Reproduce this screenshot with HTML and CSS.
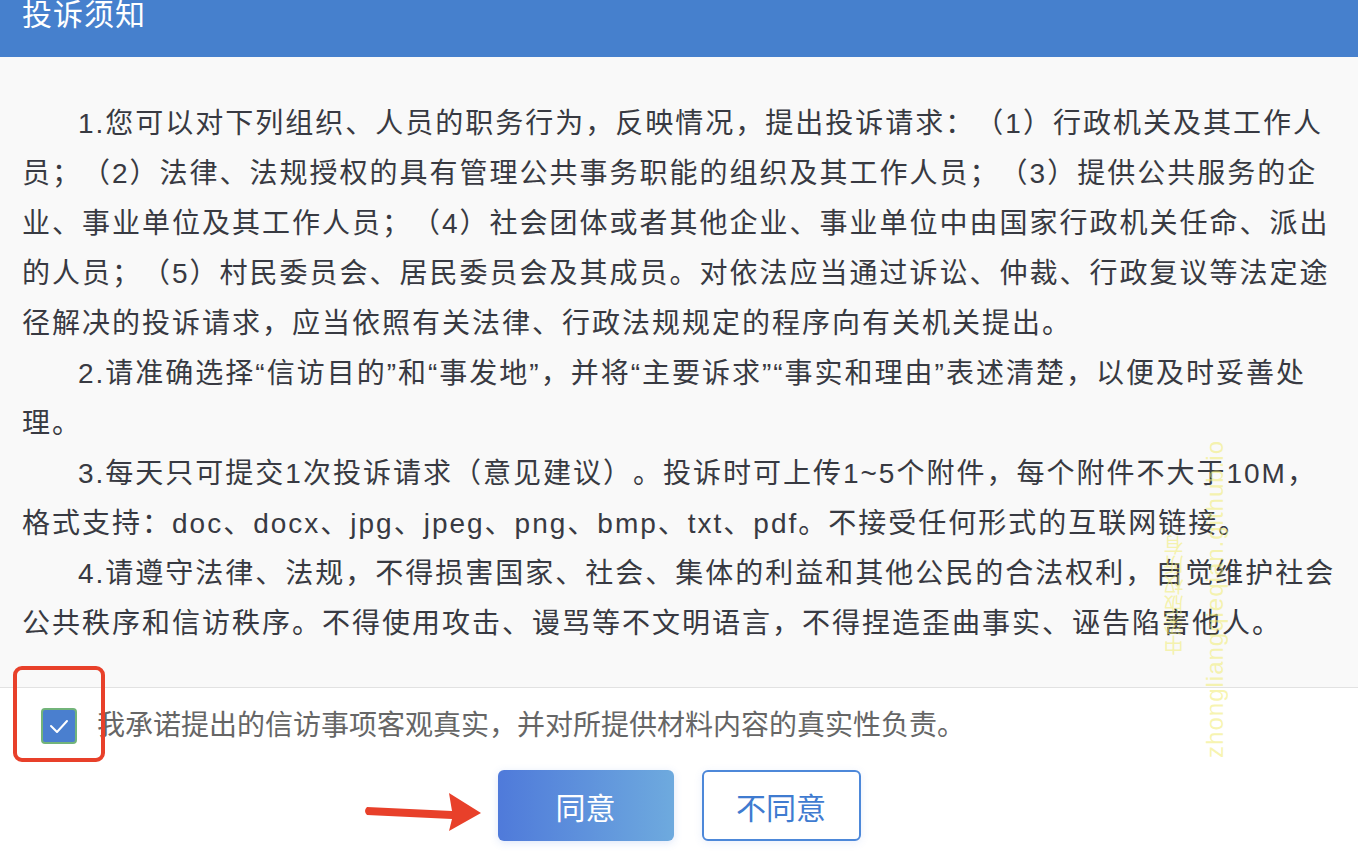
FILE: index.html
```html
<!DOCTYPE html>
<html lang="zh-CN">
<head>
    <meta charset="UTF-8">
    <meta name="viewport" content="width=device-width, initial-scale=1.0">
    <title>投诉须知</title>
    <link rel="stylesheet" href="styles.css">
</head>
<body>
    <div class="notice-header">
        <h1>投诉须知</h1>
    </div>

    <div class="notice-body">
        <p>1.您可以对下列组织、人员的职务行为，反映情况，提出投诉请求：（1）行政机关及其工作人员；（2）法律、法规授权的具有管理公共事务职能的组织及其工作人员；（3）提供公共服务的企业、事业单位及其工作人员；（4）社会团体或者其他企业、事业单位中由国家行政机关任命、派出的人员；（5）村民委员会、居民委员会及其成员。对依法应当通过诉讼、仲裁、行政复议等法定途径解决的投诉请求，应当依照有关法律、行政法规规定的程序向有关机关提出。</p>
        <p>2.请准确选择“信访目的”和“事发地”，并将“主要诉求”“事实和理由”表述清楚，以便及时妥善处理。</p>
        <p>3.每天只可提交1次投诉请求（意见建议）。投诉时可上传1~5个附件，每个附件不大于10M，格式支持：doc、docx、jpg、jpeg、png、bmp、txt、pdf。不接受任何形式的互联网链接。</p>
        <p>4.请遵守法律、法规，不得损害国家、社会、集体的利益和其他公民的合法权利，自觉维护社会公共秩序和信访秩序。不得使用攻击、谩骂等不文明语言，不得捏造歪曲事实、诬告陷害他人。</p>
    </div>

    <div class="notice-footer">
        <label class="promise">
            <span class="checkbox">
                <svg width="24" height="24" viewBox="0 0 24 24"><polyline points="4,12 10,18 20,7" fill="none" stroke="#fff" stroke-width="2" stroke-linecap="round" stroke-linejoin="round"/></svg>
            </span>
            <span class="promise-text">我承诺提出的信访事项客观真实，并对所提供材料内容的真实性负责。</span>
        </label>
        <div class="actions">
            <button class="btn btn-agree">同意</button>
            <button class="btn btn-disagree">不同意</button>
        </div>
    </div>

    <!-- annotations on top of the screenshot -->
    <div class="mark-box"></div>
    <svg class="mark-arrow" width="130" height="50" viewBox="360 790 130 50">
        <path d="M367,807 L452,811 L449,793 L481,813 L449,831 L452,819 L367,815 Q363,811 367,807 Z" fill="#e8402a"/>
    </svg>

    <div class="watermark wm-url">zhongliangqieqian.github.io</div>
    <div class="watermark wm-cn">中梁版权所有</div>
</body>
</html>
```

FILE: styles.css
```css
body {
    margin: 0;
    background-color: #fff;
    font-family: "Liberation Sans", "Noto Sans CJK SC", sans-serif;
    width: 1358px;
    height: 852px;
    overflow: hidden;
    position: relative;
}

.notice-header {
    height: 57px;
    background-color: #4680cd;
    padding-left: 22px;
}

.notice-header h1 {
    margin: 0;
    color: #fff;
    font-size: 30px;
    font-weight: 400;
    line-height: 30px;
    letter-spacing: 1px;
}

.notice-body {
    background-color: #f9f9f9;
    padding: 42px 22px 38px;
    border-bottom: 1px solid #e2e2e2;
}

.notice-body p {
    margin: 0;
    font-size: 28px;
    line-height: 50px;
    letter-spacing: 2px;
    text-indent: 56px;
    color: #383a42;
    text-spacing-trim: space-all;
}

.notice-footer {
    padding: 20px 0 0;
}

.promise {
    display: flex;
    align-items: center;
    padding-left: 41px;
}

.checkbox {
    width: 32px;
    height: 32px;
    border: 2px solid #72b47a;
    border-radius: 4px;
    background-color: #4a7fcf;
    display: flex;
    align-items: center;
    justify-content: center;
}

.promise-text {
    margin-left: 20px;
    font-size: 28px;
    color: #666;
    line-height: 36px;
    text-spacing-trim: space-all;
}

.actions {
    display: flex;
    justify-content: center;
    gap: 28px;
    margin-top: 26px;
}

.btn {
    height: 71px;
    border-radius: 6px;
    font-family: "Liberation Sans", "Noto Sans CJK SC", sans-serif;
    font-size: 30px;
    cursor: pointer;
    box-sizing: border-box;
}

.btn-agree {
    width: 176px;
    border: none;
    color: #fff;
    background: linear-gradient(90deg, #4f7ada, #6eaade);
    box-shadow: 0 2px 8px rgba(80, 120, 220, 0.18);
}

.btn-disagree {
    width: 159px;
    border: 2px solid #4d88d9;
    color: #3f7bd0;
    background-color: #fff;
    box-shadow: 0 2px 8px rgba(80, 120, 220, 0.12);
}

.mark-box {
    position: absolute;
    left: 13px;
    top: 666px;
    width: 84px;
    height: 88px;
    border: 4px solid #e8402a;
    border-radius: 9px;
}

.mark-arrow {
    position: absolute;
    left: 360px;
    top: 790px;
}

.watermark {
    position: absolute;
    writing-mode: vertical-rl;
    transform: rotate(180deg);
    color: rgba(240, 236, 110, 0.55);
    white-space: nowrap;
}

.wm-url {
    left: 1202px;
    top: 440px;
    font-family: "Liberation Sans", sans-serif;
    font-size: 24px;
    line-height: 26px;
    letter-spacing: 1px;
}

.wm-cn {
    left: 1163px;
    top: 535px;
    font-family: "Noto Sans CJK SC", sans-serif;
    font-size: 20px;
    line-height: 22px;
}
```
